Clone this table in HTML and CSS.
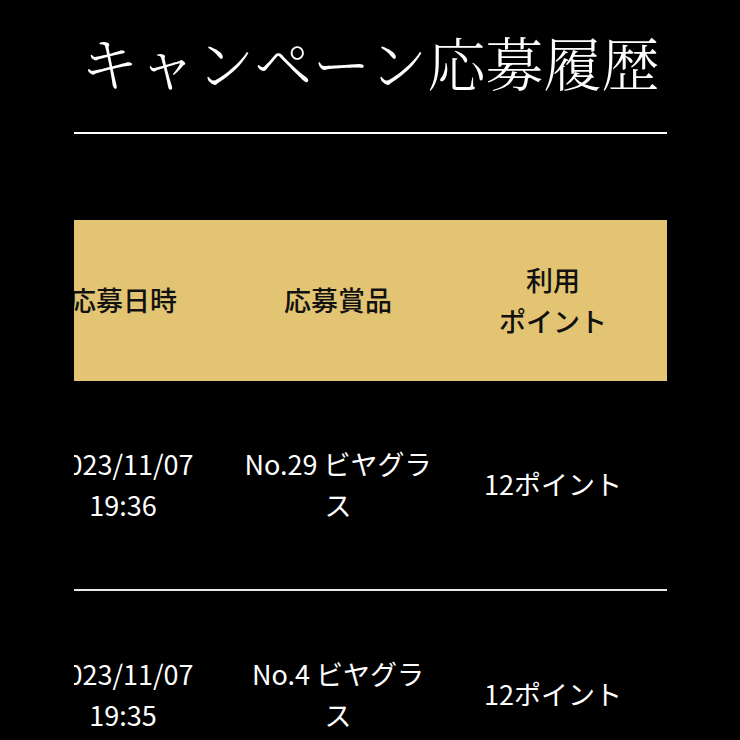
FILE: index.html
```html
<!DOCTYPE html>
<html lang="ja">
<head>
<meta charset="utf-8">
<title>キャンペーン応募履歴</title>
<link rel="stylesheet" href="styles.css">
</head>
<body>
<main class="page">
  <h1 class="title">キャンペーン応募履歴</h1>
  <div class="rule"></div>
  <div class="table-wrap">
    <div class="table">
      <div class="row head">
        <div class="cell">応募日時</div>
        <div class="cell">応募賞品</div>
        <div class="cell">利用<br>ポイント</div>
      </div>
      <div class="row data">
        <div class="cell">2023/11/07<br>19:36</div>
        <div class="cell">No.29 ビヤグラス</div>
        <div class="cell">12ポイント</div>
      </div>
      <div class="row data">
        <div class="cell">2023/11/07<br>19:35</div>
        <div class="cell">No.4 ビヤグラス</div>
        <div class="cell">12ポイント</div>
      </div>
    </div>
  </div>
</main>
</body>
</html>
```
FILE: styles.css
```css
html, body {
  margin: 0;
  padding: 0;
  background: #000;
}
body {
  font-family: "Noto Sans CJK JP", "Noto Sans", sans-serif;
  color: #fff;
}
.page {
  width: 593px;
  margin: 0 auto;
}
.title {
  margin: 0;
  padding-top: 18px;
  font-family: "Noto Serif CJK JP", "Noto Sans CJK JP", serif;
  font-weight: 300;
  font-size: 58px;
  line-height: 87px;
  text-align: center;
  white-space: nowrap;
  color: #fff;
}
.rule {
  margin-top: 27px;
  height: 2px;
  background: #fff;
}
.table-wrap {
  margin-top: 86px;
  overflow: hidden;
}
.table {
  width: 651px;
  margin-left: -58px;
}
.row {
  display: grid;
  grid-template-columns: repeat(3, 215px);
  align-items: center;
}
.head {
  height: 161px;
  background: #e2c472;
  color: #111;
  font-weight: 500;
}
.cell {
  padding: 0 10px;
  text-align: center;
  font-size: 27px;
  line-height: 1.5;
}
.data {
  height: 207px;
  padding-bottom: 1px;
  border-bottom: 2px solid #e8e8e8;
}
.data .cell:first-child {
  white-space: nowrap;
}
```
